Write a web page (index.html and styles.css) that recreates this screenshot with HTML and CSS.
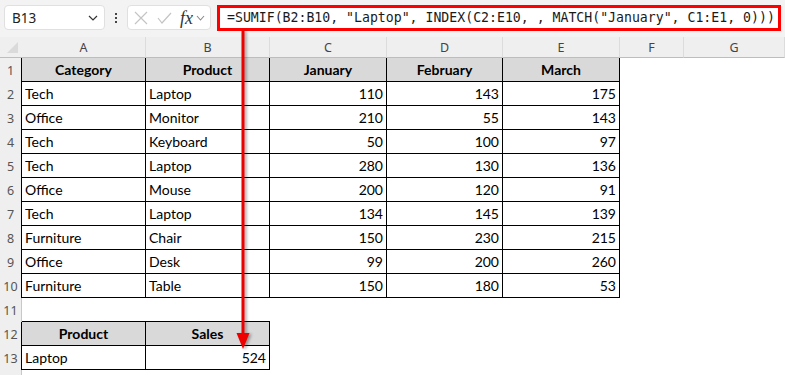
FILE: index.html
```html
<!DOCTYPE html>
<html>
<head>
<meta charset="utf-8">
<link rel="stylesheet" href="styles.css">
</head>
<body>
<div class="toolbar">
  <div class="namebox"><span>B13</span>
    <svg class="chev" width="10" height="6" viewBox="0 0 10 6"><path d="M1 1 L5 5 L9 1" fill="none" stroke="#333" stroke-width="1.2"/></svg>
  </div>
  <div class="dots"><i></i><i></i><i></i></div>
  <div class="fxbox">
    <svg width="14" height="14" viewBox="0 0 14 14"><path d="M1 1 L13 13 M13 1 L1 13" stroke="#c4c4c4" stroke-width="1.2" fill="none"/></svg>
    <svg width="15" height="12" viewBox="0 0 15 12"><path d="M1 6 L5 11 L14 1" stroke="#c4c4c4" stroke-width="1.2" fill="none"/></svg>
    <span class="fx">fx</span>
    <svg width="9" height="6" viewBox="0 0 9 6"><path d="M1 1 L4.5 5 L8 1" fill="none" stroke="#8a8a8a" stroke-width="1.1"/></svg>
  </div>
  <div class="formula">=SUMIF(B2:B10, "Laptop", INDEX(C2:E10, , MATCH("January", C1:E1, 0)))</div>
</div>

<div class="sheet">
  <div class="corner"><span class="tri"></span></div>
  <div class="ch">A</div><div class="ch">B</div><div class="ch">C</div><div class="ch">D</div><div class="ch">E</div><div class="ch">F</div><div class="ch">G</div>

  <div class="rh t">1</div><div class="c b h">Category</div><div class="c b h">Product</div><div class="c b h">January</div><div class="c b h">February</div><div class="c b h">March</div><div class="c"></div><div class="c"></div>
  <div class="rh t">2</div><div class="c b">Tech</div><div class="c b">Laptop</div><div class="c b n">110</div><div class="c b n">143</div><div class="c b n">175</div><div class="c"></div><div class="c"></div>
  <div class="rh t">3</div><div class="c b">Office</div><div class="c b">Monitor</div><div class="c b n">210</div><div class="c b n">55</div><div class="c b n">143</div><div class="c"></div><div class="c"></div>
  <div class="rh t">4</div><div class="c b">Tech</div><div class="c b">Keyboard</div><div class="c b n">50</div><div class="c b n">100</div><div class="c b n">97</div><div class="c"></div><div class="c"></div>
  <div class="rh t">5</div><div class="c b">Tech</div><div class="c b">Laptop</div><div class="c b n">280</div><div class="c b n">130</div><div class="c b n">136</div><div class="c"></div><div class="c"></div>
  <div class="rh t">6</div><div class="c b">Office</div><div class="c b">Mouse</div><div class="c b n">200</div><div class="c b n">120</div><div class="c b n">91</div><div class="c"></div><div class="c"></div>
  <div class="rh t">7</div><div class="c b">Tech</div><div class="c b">Laptop</div><div class="c b n">134</div><div class="c b n">145</div><div class="c b n">139</div><div class="c"></div><div class="c"></div>
  <div class="rh t">8</div><div class="c b">Furniture</div><div class="c b">Chair</div><div class="c b n">150</div><div class="c b n">230</div><div class="c b n">215</div><div class="c"></div><div class="c"></div>
  <div class="rh t">9</div><div class="c b">Office</div><div class="c b">Desk</div><div class="c b n">99</div><div class="c b n">200</div><div class="c b n">260</div><div class="c"></div><div class="c"></div>
  <div class="rh t">10</div><div class="c b">Furniture</div><div class="c b">Table</div><div class="c b n">150</div><div class="c b n">180</div><div class="c b n">53</div><div class="c"></div><div class="c"></div>
  <div class="rh">11</div><div class="c bb"></div><div class="c bb"></div><div class="c"></div><div class="c"></div><div class="c"></div><div class="c"></div><div class="c"></div>
  <div class="rh t">12</div><div class="c b h">Product</div><div class="c b h">Sales</div><div class="c"></div><div class="c"></div><div class="c"></div><div class="c"></div><div class="c"></div>
  <div class="rh t">13</div><div class="c b">Laptop</div><div class="c b n">524</div><div class="c"></div><div class="c"></div><div class="c"></div><div class="c"></div><div class="c"></div>
  <div class="rh"></div><div class="c"></div><div class="c"></div><div class="c"></div><div class="c"></div><div class="c"></div><div class="c"></div><div class="c"></div>
</div>

<svg class="arrow" width="785" height="375" viewBox="0 0 785 375">
  <g class="arrow-g">
    <line x1="243" y1="30" x2="243" y2="336" stroke="#ee0000" stroke-width="3"/>
    <polygon points="236.5,333 249.5,333 243,349" fill="#ee0000"/>
  </g>
</svg>
</body>
</html>
```
FILE: styles.css
```css
html, body { margin: 0; padding: 0; }
body {
  width: 785px;
  height: 375px;
  overflow: hidden;
  position: relative;
  background: #fff;
  font-family: Lato, "Liberation Sans", sans-serif;
}
.toolbar {
  height: 37px;
  background: #f3f3f3;
  display: flex;
  align-items: flex-start;
  padding-top: 5px;
  box-sizing: border-box;
}
.namebox {
  margin-left: 4px;
  width: 101px;
  height: 25px;
  box-sizing: border-box;
  background: #fff;
  border: 1px solid #e0e0e0;
  border-radius: 4px;
  display: flex;
  align-items: center;
  justify-content: space-between;
  padding: 0 6px 0 7px;
  font-family: "Noto Sans", "Open Sans", sans-serif;
  font-size: 13.5px;
  color: #222;
}
.dots {
  width: 22px;
  height: 25px;
  display: flex;
  flex-direction: column;
  align-items: center;
  justify-content: center;
  gap: 2px;
}
.dots i { display: block; width: 2px; height: 2px; background: #444; }
.fxbox {
  width: 84px;
  height: 25px;
  box-sizing: border-box;
  background: #fff;
  border: 1px solid #e0e0e0;
  border-radius: 4px;
  display: flex;
  align-items: center;
  padding: 0 4px 0 6px;
  gap: 9px;
}
.fxbox .fx {
  font-family: "Liberation Serif", serif;
  font-style: italic;
  font-size: 18px;
  line-height: 18px;
  color: #333;
  margin-right: -6px;
  margin-left: -1px;
}
.formula {
  margin-left: 6px;
  width: 564px;
  height: 26px;
  box-sizing: border-box;
  border: 3px solid #ff0000;
  background: #fff;
  font-family: "DejaVu Sans Mono", monospace;
  font-size: 13.2px;
  line-height: 20px;
  padding-left: 7px;
  color: #1a1a1a;
  white-space: nowrap;
  overflow: hidden;
}
.sheet {
  display: grid;
  grid-template-columns: 22px 124px 124px 117px 116px 117px 64px 1fr;
  grid-template-rows: 21px repeat(14, 24px);
}
.corner {
  background: #efefef;
  border-bottom: 1px solid #bdbdbd;
  position: relative;
}
.corner .tri {
  position: absolute;
  right: 4px;
  bottom: 4px;
  width: 0;
  height: 0;
  border-left: 11px solid transparent;
  border-bottom: 11px solid #dadada;
}
.ch {
  background: #efefef;
  border-bottom: 1px solid #bdbdbd;
  border-right: 1px solid #dcdcdc;
  box-sizing: border-box;
  display: flex;
  align-items: center;
  justify-content: center;
  font-family: "Noto Sans", "Open Sans", sans-serif;
  font-size: 12.5px;
  color: #444;
  padding-top: 1px;
}
.rh {
  background: #efefef;
  border-right: 1px solid #c8c8c8;
  box-sizing: border-box;
  display: flex;
  align-items: flex-end;
  justify-content: center;
  padding-bottom: 3px;
  font-family: "Noto Sans", "Open Sans", sans-serif;
  font-size: 12.5px;
  color: #555;
}
.rh.t { border-right-color: #000; }
.c {
  box-sizing: border-box;
  display: flex;
  align-items: flex-end;
  padding: 0 3px 3px 3px;
  font-size: 14px;
  line-height: 17px;
  color: #000;
  white-space: nowrap;
}
.c.b { border-right: 1px solid #000; border-bottom: 1px solid #000; }
.c.bb { border-bottom: 1px solid #000; }
.c.h { background: #d9d9d9; font-weight: bold; justify-content: center; }
.c.n { justify-content: flex-end; }
.arrow {
  position: absolute;
  left: 0;
  top: 0;
  pointer-events: none;
}
.arrow-g { filter: drop-shadow(2px 1px 1.5px rgba(0,0,0,0.35)); }
```
